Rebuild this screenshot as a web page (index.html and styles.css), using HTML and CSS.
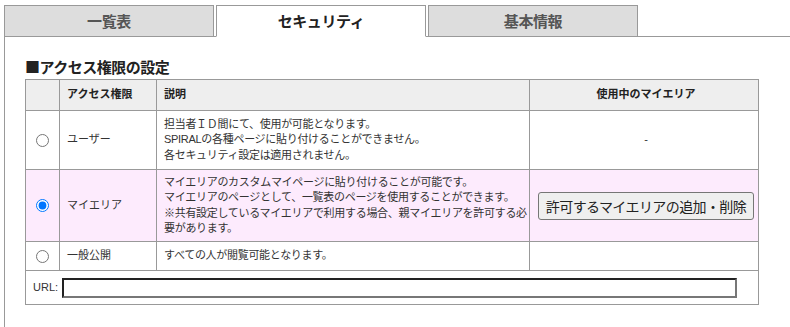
FILE: index.html
```html
<!DOCTYPE html>
<html lang="ja">
<head>
  <meta charset="utf-8">
  <title>セキュリティ</title>
  <link rel="stylesheet" href="styles.css">
</head>
<body>
  <div class="tabs">
    <div class="tab">一覧表</div>
    <div class="tab active">セキュリティ</div>
    <div class="tab">基本情報</div>
  </div>
  <div class="panel">
    <h2 class="section-title">■アクセス権限の設定</h2>
    <table class="access-table">
      <colgroup>
        <col class="col-radio">
        <col class="col-name">
        <col class="col-desc">
        <col class="col-area">
      </colgroup>
      <tr>
        <th></th>
        <th>アクセス権限</th>
        <th>説明</th>
        <th class="center">使用中のマイエリア</th>
      </tr>
      <tr class="row-user">
        <td class="radio-cell"><input type="radio" name="access"></td>
        <td>ユーザー</td>
        <td class="desc">担当者ＩＤ間にて、使用が可能となります。<br>SPIRALの各種ページに貼り付けることができません。<br>各セキュリティ設定は適用されません。</td>
        <td class="center">-</td>
      </tr>
      <tr class="selected">
        <td class="radio-cell"><input type="radio" name="access" checked></td>
        <td>マイエリア</td>
        <td class="desc">マイエリアのカスタムマイページに貼り付けることが可能です。<br>マイエリアのページとして、一覧表のページを使用することができます。<br>※共有設定しているマイエリアで利用する場合、親マイエリアを許可する必<br>要があります。</td>
        <td class="center"><button type="button" class="area-button">許可するマイエリアの追加・削除</button></td>
      </tr>
      <tr class="row-public">
        <td class="radio-cell"><input type="radio" name="access"></td>
        <td>一般公開</td>
        <td class="desc">すべての人が閲覧可能となります。</td>
        <td></td>
      </tr>
      <tr class="row-url">
        <td colspan="4"><label class="url-label" for="url">URL:</label><input type="text" id="url" class="url-input"></td>
      </tr>
    </table>
  </div>
</body>
</html>
```

FILE: styles.css
```css
body {
  margin: 0;
  font-family: "Liberation Sans", "Noto Sans CJK JP", sans-serif;
  color: #333;
  overflow: hidden;
}

.tabs {
  display: flex;
  padding: 5px 0 0 4px;
}

.tab {
  width: 208px;
  height: 30px;
  margin-right: 2px;
  border: 1px solid #999;
  background-color: #ddd;
  color: #555;
  font-family: "Noto Sans CJK JP", sans-serif;
  font-size: 15px;
  font-weight: bold;
  letter-spacing: -0.4px;
  line-height: 30px;
  text-align: center;
}

.tab.active {
  position: relative;
  z-index: 1;
  background-color: #fff;
  color: #222;
  border-bottom-color: #fff;
}

.panel {
  margin: -1px 0 0 4px;
  width: 800px;
  height: 270px;
  border-top: 1px solid #999;
  border-left: 1px solid #999;
  padding: 20px 0 0 20px;
}

.section-title {
  margin: 0 0 3px 0;
  font-family: "Noto Sans CJK JP", sans-serif;
  font-size: 15px;
  letter-spacing: -0.5px;
  line-height: 19px;
  color: #222;
}

.access-table {
  width: 733px;
  table-layout: fixed;
  border-collapse: collapse;
  font-size: 11px;
  line-height: 15.5px;
}

.col-radio {
  width: 34px;
}

.col-name {
  width: 97px;
}

.col-desc {
  width: 373px;
}

.col-area {
  width: 229px;
}

.access-table th,
.access-table td {
  border: 1px solid #999;
  padding: 0 3px 0 7px;
  text-align: left;
  vertical-align: middle;
}

.access-table th {
  height: 30px;
  background-color: #eee;
  color: #222;
}

.access-table .center {
  text-align: center;
}

.access-table td.desc {
  white-space: nowrap;
  letter-spacing: -0.3px;
}

.access-table td.radio-cell {
  text-align: center;
  padding: 0;
}

.row-user td {
  height: 58px;
}

.selected td {
  height: 71px;
  background-color: #fdebfd;
}

.row-public td {
  height: 28px;
}

.access-table .row-url td {
  height: 33px;
  padding: 0 4px 0 7px;
}

input[type="radio"] {
  margin: 0;
  width: 13px;
  height: 13px;
  vertical-align: middle;
}

.area-button {
  font-family: "Liberation Sans", "Noto Sans CJK JP", sans-serif;
  font-size: 14px;
  letter-spacing: -0.6px;
  white-space: nowrap;
  color: #222;
  padding: 0 7px;
  height: 28px;
  background-color: #efefef;
  border: 1px solid #767676;
  border-radius: 3px;
}

.url-label {
  font-size: 11px;
  margin-right: 4px;
  vertical-align: middle;
}

.url-input {
  width: 671px;
  height: 16px;
  padding: 0;
  border: 2px solid;
  border-color: #222 #777 #777 #222;
  vertical-align: middle;
}
```
